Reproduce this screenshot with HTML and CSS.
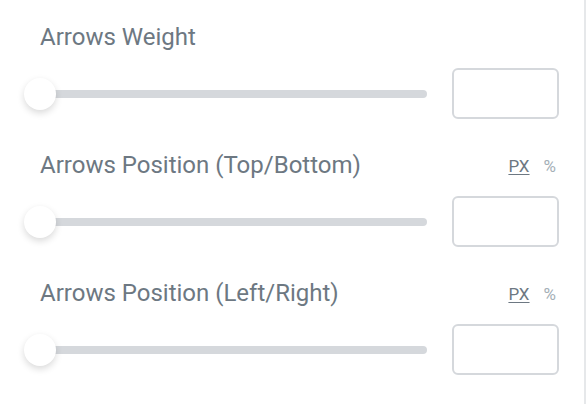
FILE: index.html
```html
<!DOCTYPE html>
<html>
<head>
<meta charset="utf-8">
<link rel="stylesheet" href="styles.css">
</head>
<body>
<div class="panel">
  <div class="control">
    <div class="label-row">
      <span class="label">Arrows Weight</span>
    </div>
    <div class="slider-row">
      <div class="slider"><div class="track"></div><div class="thumb"></div></div>
      <div class="input"></div>
    </div>
  </div>
  <div class="control">
    <div class="label-row">
      <span class="label">Arrows Position (Top/Bottom)</span>
      <span class="units"><span class="unit active">PX</span><span class="unit">%</span></span>
    </div>
    <div class="slider-row">
      <div class="slider"><div class="track"></div><div class="thumb"></div></div>
      <div class="input"></div>
    </div>
  </div>
  <div class="control">
    <div class="label-row">
      <span class="label">Arrows Position (Left/Right)</span>
      <span class="units"><span class="unit active">PX</span><span class="unit">%</span></span>
    </div>
    <div class="slider-row">
      <div class="slider"><div class="track"></div><div class="thumb"></div></div>
      <div class="input"></div>
    </div>
  </div>
</div>
</body>
</html>
```
FILE: styles.css
```css
html, body {
  margin: 0;
  padding: 0;
  background: #fff;
}
body {
  width: 586px;
  height: 404px;
  overflow: hidden;
  font-family: Roboto, "Liberation Sans", sans-serif;
}
.panel {
  width: 586px;
  height: 404px;
  box-sizing: border-box;
  border-right: 2px solid #e6e8ea;
  padding: 21px 25px 0 40px;
}
.control {
  margin-bottom: 30px;
}
.label-row {
  display: flex;
  justify-content: space-between;
  align-items: center;
  height: 30px;
}
.label {
  font-size: 24px;
  line-height: 28px;
  padding-top: 1px;
  color: #6d7882;
}
.units {
  display: flex;
  gap: 14px;
  padding-right: 3px;
  font-size: 17px;
  color: #a4afb7;
  margin-top: 4px;
}
.unit.active {
  color: #6d7882;
  text-decoration: underline;
  text-underline-offset: 2px;
}
.slider-row {
  display: flex;
  align-items: center;
  margin-top: 17px;
  height: 51px;
}
.slider {
  position: relative;
  width: 387px;
  height: 8px;
  margin-right: 25px;
}
.track {
  height: 8px;
  border-radius: 4px;
  background: #d5d8dc;
}
.thumb {
  position: absolute;
  left: -16px;
  top: -12px;
  width: 32px;
  height: 32px;
  border-radius: 50%;
  background: #fff;
  box-shadow: 0 3px 7px rgba(0, 0, 0, 0.15);
}
.input {
  width: 107px;
  height: 51px;
  box-sizing: border-box;
  border: 2px solid #d5d8dc;
  border-radius: 6px;
}
```
